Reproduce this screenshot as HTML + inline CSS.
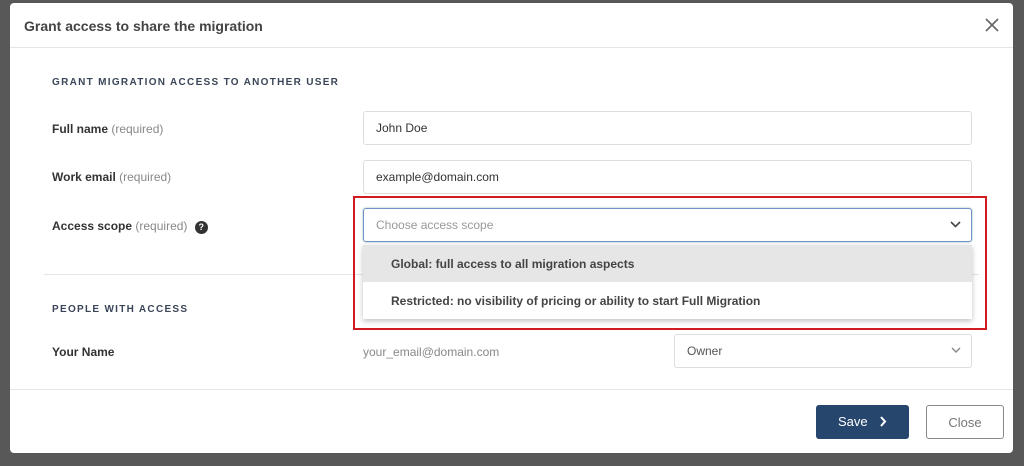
<!DOCTYPE html>
<html><head><style>
*{box-sizing:border-box;margin:0;padding:0}
body{width:1024px;height:466px;background:#585858;font-family:"Liberation Sans",sans-serif;position:relative;overflow:hidden}
.m{position:absolute;left:10px;top:3px;width:1003px;height:450px;background:#fff;border-radius:4px}
.hd{height:45px;border-bottom:1px solid #e5e5e5;padding:15px 14px;font-size:14px;font-weight:bold;color:#444}
.x{position:absolute;right:14px;top:15px}
.sec{position:absolute;left:42px;font-size:10px;letter-spacing:1.3px;font-weight:bold;color:#3a4658}
.lbl{position:absolute;left:42px;font-size:12px;font-weight:bold;color:#333}
.lbl span{color:#888;font-weight:normal}
.in{position:absolute;left:353px;width:609px;height:34px;border:1px solid #ddd;border-radius:3px;padding:9px 12px;font-size:12px;color:#333}
.hr{position:absolute;left:34px;right:34px;height:1px;background:#e5e5e5}
.cv{position:absolute;right:10px;top:12px}
</style></head><body>
<div class="m">
<div class="hd">Grant access to share the migration<svg class="x" width="14" height="14" viewBox="0 0 14 14"><path d="M1 1L13 13M13 1L1 13" stroke="#666" stroke-width="1.6"/></svg></div>
<div class="sec" style="top:74px">GRANT MIGRATION ACCESS TO ANOTHER USER</div>
<div class="lbl" style="top:119px">Full name <span>(required)</span></div>
<div class="in" style="top:108px">John Doe</div>
<div class="lbl" style="top:167px">Work email <span>(required)</span></div>
<div class="in" style="top:157px">example@domain.com</div>
<div class="lbl" style="top:216px">Access scope <span>(required)</span> <b style="display:inline-block;width:13px;height:13px;border-radius:50%;background:#333;color:#fff;font-size:9px;text-align:center;line-height:13px;margin-left:4px">?</b></div>
<div class="hr" style="top:271px"></div>
<div class="sec" style="top:301px">PEOPLE WITH ACCESS</div>
<div class="lbl" style="top:342px">Your Name</div>
<div style="position:absolute;left:353px;top:342px;font-size:12px;color:#888">your_email@domain.com</div>
<div class="in" style="top:331px;left:664px;width:298px;color:#555">Owner<svg class="cv" width="10" height="7" viewBox="0 0 10 7"><path d="M1 1L5 5L9 1" stroke="#888" stroke-width="1.4" fill="none"/></svg></div>
<div class="hr" style="top:386px;left:0;right:0"></div>
<div style="position:absolute;left:806px;top:402px;width:93px;height:34px;background:#27466e;border-radius:3px;color:#fff;font-size:13px;padding:9px 0 0 22px">Save <svg width="8" height="11" viewBox="0 0 8 11" style="margin-left:8px;vertical-align:-1px"><path d="M2 1L6 5.5L2 10" stroke="#fff" stroke-width="2" fill="none"/></svg></div>
<div style="position:absolute;left:916px;top:402px;width:78px;height:34px;border:1px solid #888;border-radius:3px;color:#777;font-size:13px;text-align:center;padding-top:9px">Close</div>
<div style="position:absolute;left:343px;top:193px;width:634px;height:134px;border:2px solid #d01c20"></div>
<div style="position:absolute;left:353px;top:205px;width:609px;height:34px;border:1px solid #6f93c6;border-radius:3px;padding:9px 12px;font-size:12px;color:#999;box-shadow:0 0 2px #9bb">Choose access scope<svg class="cv" width="11" height="7" viewBox="0 0 11 7"><path d="M1 1L5.5 5.5L10 1" stroke="#444" stroke-width="1.6" fill="none"/></svg></div>
<div style="position:absolute;left:353px;top:242px;width:609px;height:74px;box-shadow:0 2px 5px rgba(0,0,0,.25)">
<div style="height:37px;background:#e6e6e6;padding:12px 28px;font-size:12px;font-weight:bold;color:#444">Global: full access to all migration aspects</div>
<div style="height:37px;background:#fff;padding:12px 28px;font-size:12px;font-weight:bold;color:#444">Restricted: no visibility of pricing or ability to start Full Migration</div>
</div>
</div>
</body></html>
